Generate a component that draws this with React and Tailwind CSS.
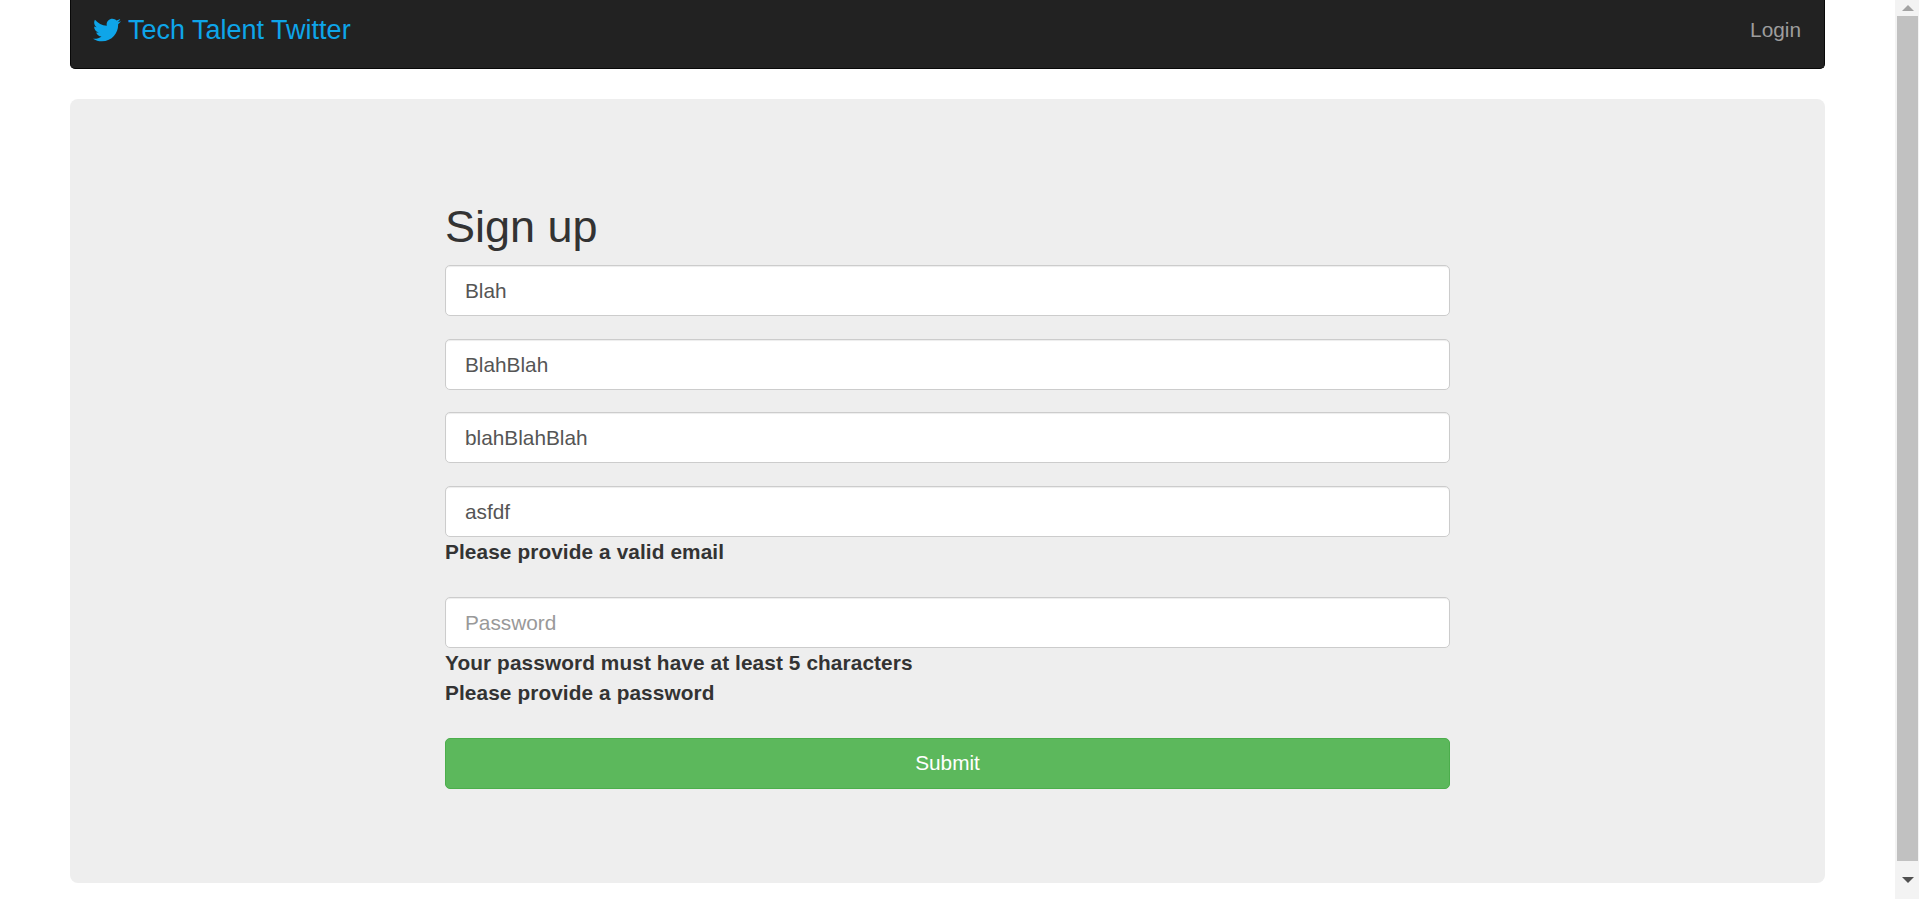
import { FaTwitter } from "react-icons/fa";

const inputClass =
  "block w-full h-[51px] px-[19px] bg-white border border-[#ccc] rounded-[5px] text-[20.8px] text-[#555] placeholder:text-[#999] shadow-[inset_0_1px_1px_rgba(0,0,0,0.075)] outline-none";

function ErrorText({ children }) {
  return <div className="h-[30px] leading-[30px] text-[20.8px] font-bold tracking-[0.1px] text-[#333]">{children}</div>;
}

function Scrollbar() {
  return (
    <aside className="w-[24px] shrink-0 h-full flex flex-col items-center bg-[#f3f3f3]">
      <div className="h-[16px] pl-[1px] flex items-center justify-center">
        <div className="w-0 h-0 border-x-[6px] border-x-transparent border-b-[6px] border-b-[#a3a3a3]" />
      </div>
      <div className="w-[21px] h-[845px] ml-[1px] bg-[#c1c1c1]" />
      <div className="flex-1 pl-[1px] flex items-center justify-center">
        <div className="w-0 h-0 border-x-[6px] border-x-transparent border-t-[6px] border-t-[#505050]" />
      </div>
    </aside>
  );
}

export default function App() {
  return (
    <div className="flex h-[899px] overflow-hidden bg-white font-['Liberation_Sans',Arial,sans-serif] text-[#333]">
      <main className="flex-1 min-w-0">
        <div className="w-[1755px] mx-auto">
          <nav className="h-[69px] pl-[22px] pr-[23px] pb-[8px] flex items-center justify-between bg-[#222] border border-t-0 border-[#080808] rounded-b-[5px]">
            <a className="flex items-center gap-[7px] text-[27px] text-[#0ea5e9]" href="#">
              <FaTwitter className="w-[28px] h-[28px] text-[#0ea5e9]" />
              Tech Talent Twitter
            </a>
            <a className="text-[20.8px] text-[#9d9d9d]" href="#">Login</a>
          </nav>

          <section className="mt-[30px] h-[784px] pt-[97px] bg-[#eee] rounded-[8px]">
            <form className="w-[1005px] mx-auto" onSubmit={(e) => e.preventDefault()}>
              <h1 className="text-[45px] leading-[61px] mb-[8px] font-normal text-[#333]">Sign up</h1>
              <input className={inputClass} defaultValue="Blah" />
              <input className={`${inputClass} mt-[23px]`} defaultValue="BlahBlah" />
              <input className={`${inputClass} mt-[22px]`} defaultValue="blahBlahBlah" />
              <input className={`${inputClass} mt-[23px]`} defaultValue="asfdf" />
              <ErrorText>Please provide a valid email</ErrorText>
              <input className={`${inputClass} mt-[30px]`} placeholder="Password" />
              <ErrorText>Your password must have at least 5 characters</ErrorText>
              <ErrorText>Please provide a password</ErrorText>
              <button className="mt-[30px] block w-full h-[51px] bg-[#5cb85c] border border-[#4cae4c] rounded-[5px] text-[20.8px] text-white pb-[2px]">
                Submit
              </button>
            </form>
          </section>
        </div>
      </main>
      <Scrollbar />
    </div>
  );
}
